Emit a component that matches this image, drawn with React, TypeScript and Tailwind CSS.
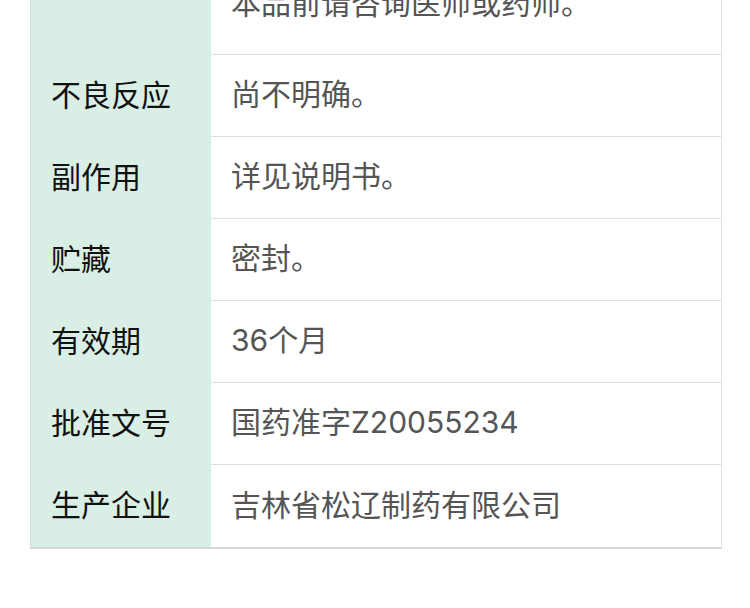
import React from 'react'

interface SpecRow {
  label: string
  value: string
}

const rows: SpecRow[] = [
  { label: '不良反应', value: '尚不明确。' },
  { label: '副作用', value: '详见说明书。' },
  { label: '贮藏', value: '密封。' },
  { label: '有效期', value: '36个月' },
  { label: '批准文号', value: '国药准字Z20055234' },
  { label: '生产企业', value: '吉林省松辽制药有限公司' },
]

export default function App() {
  return (
    <div
      className="w-[750px] h-[608px] overflow-hidden bg-white"
      style={{ fontFamily: 'Inter, "Noto Sans CJK SC", sans-serif' }}
    >
      <div className="ml-[30px] w-[692px] border-x border-b-2 border-[#dedede] border-b-[#d9d9d9]">
        {/* tail of the previous row, scrolled out of view */}
        <div className="grid grid-cols-[180px_1fr]">
          <div className="bg-[#d9eee4]" />
          <div className="h-[55px] flex items-end pb-[30px] px-5 border-b border-[#e0e0e0] text-[30px] leading-[42px] text-[#555]">
            本品前请咨询医师或药师。
          </div>
        </div>

        {rows.map((row, i) => (
          <div key={row.label} className="grid grid-cols-[180px_1fr]">
            <div className="bg-[#d9eee4] flex items-center px-5 pb-[3px] text-[30px] leading-[42px] text-[#111]">
              {row.label}
            </div>
            <div
              className={
                i === rows.length - 1
                  ? 'h-[82px] flex items-center px-5 pb-[3px] text-[30px] leading-[42px] text-[#555]'
                  : 'h-[82px] flex items-center px-5 pb-[3px] border-b border-[#e0e0e0] text-[30px] leading-[42px] text-[#555]'
              }
            >
              {row.value}
            </div>
          </div>
        ))}
      </div>
    </div>
  )
}
